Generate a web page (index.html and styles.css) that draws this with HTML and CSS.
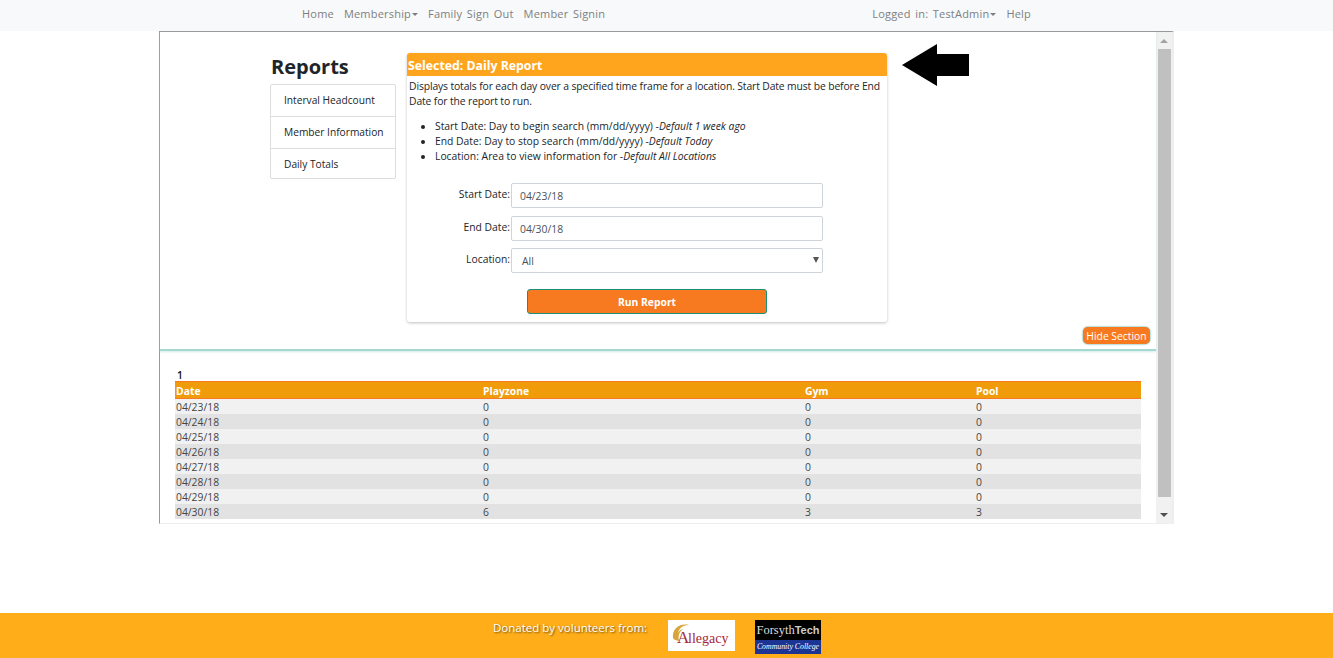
FILE: index.html
```html
<!DOCTYPE html>
<html lang="en">
<head>
    <meta charset="UTF-8">
    <title>Reports</title>
    <link rel="stylesheet" href="styles.css">
</head>
<body>
    <nav class="topnav">
        <div class="navleft">
            <a href="#">Home</a>
            <a href="#" class="caret">Membership</a>
            <a href="#">Family Sign Out</a>
            <a href="#">Member Signin</a>
        </div>
        <div class="navright">
            <a href="#" class="caret">Logged in: TestAdmin</a>
            <a href="#">Help</a>
        </div>
    </nav>

    <div class="frame">
        <div class="framebody">
            <section class="toppane">
                <div class="sidebar">
                    <h2>Reports</h2>
                    <ul class="reportlist">
                        <li>Interval Headcount</li>
                        <li>Member Information</li>
                        <li>Daily Totals</li>
                    </ul>
                </div>
                <div class="panel">
                    <div class="panelhead">Selected: Daily Report</div>
                    <p class="paneltext">Displays totals for each day over a specified time frame for a location. Start Date must be before End Date for the report to run.</p>
                    <ul class="fields">
                        <li>Start Date: Day to begin search (mm/dd/yyyy) -<em>Default 1 week ago</em></li>
                        <li>End Date: Day to stop search (mm/dd/yyyy) -<em>Default Today</em></li>
                        <li>Location: Area to view information for -<em>Default All Locations</em></li>
                    </ul>
                    <form class="reportform">
                        <label>Start Date:</label>
                        <div class="input">04/23/18</div>
                        <label>End Date:</label>
                        <div class="input">04/30/18</div>
                        <label>Location:</label>
                        <div class="input select">All</div>
                    </form>
                    <button class="runbtn" type="button">Run Report</button>
                </div>
                <svg class="arrow" width="68" height="42" viewBox="0 0 68 42">
                    <polygon points="0,21 35,0 35,10 67,10 67,32 35,32 35,42" fill="#000"/>
                </svg>
                <button class="hidebtn" type="button">Hide Section</button>
            </section>
            <section class="bottompane">
                <div class="pagenum">1</div>
                <table class="results">
                    <thead>
                        <tr><th>Date</th><th>Playzone</th><th>Gym</th><th>Pool</th></tr>
                    </thead>
                    <tbody>
                        <tr><td>04/23/18</td><td>0</td><td>0</td><td>0</td></tr>
                        <tr><td>04/24/18</td><td>0</td><td>0</td><td>0</td></tr>
                        <tr><td>04/25/18</td><td>0</td><td>0</td><td>0</td></tr>
                        <tr><td>04/26/18</td><td>0</td><td>0</td><td>0</td></tr>
                        <tr><td>04/27/18</td><td>0</td><td>0</td><td>0</td></tr>
                        <tr><td>04/28/18</td><td>0</td><td>0</td><td>0</td></tr>
                        <tr><td>04/29/18</td><td>0</td><td>0</td><td>0</td></tr>
                        <tr><td>04/30/18</td><td>6</td><td>3</td><td>3</td></tr>
                    </tbody>
                </table>
            </section>
        </div>
        <div class="scrollbar">
            <div class="sarrow up"></div>
            <div class="thumb"></div>
            <div class="sarrow down"></div>
        </div>
    </div>

    <footer class="footer">
        <span class="donated">Donated by volunteers from:</span>
        <svg class="allegacy" width="67" height="31" viewBox="0 0 67 31">
            <rect width="67" height="31" fill="#fff"/>
            <path d="M5 18 C4 9 11 3 21 5 C14 5 9 9 9 19 C8 14 11 10 15 9 C11 12 10 16 11 21 C8 20 6 20 5 18 Z" fill="#d9a53a"/>
            <text x="9" y="23" class="alogo big">A</text>
            <text x="20" y="23" class="alogo">llegacy</text>
        </svg>
        <div class="forsyth">
            <div class="fname">Forsyth<b>Tech</b></div>
            <div class="fcollege">Community College</div>
        </div>
    </footer>
</body>
</html>
```

FILE: styles.css
```css
*{
    margin: 0;
    padding: 0;
    box-sizing: border-box;
    list-style: none;
}
html,body{
    height: 100%;
}
body{
    display: flex;
    flex-direction: column;
    height: 658px;
    overflow: hidden;
    background: #fff;
    color: #212529;
    font-family: "Open Sans", "Noto Sans", sans-serif;
    font-size: 10.35px;
}
a{
    color: #7d7f81;
    text-decoration: none;
}

/* top nav */
.topnav{
    display: flex;
    justify-content: space-between;
    height: 31px;
    padding: 0 302px 5px;
    align-items: center;
    background: #f8f9fa;
    font-size: 11px;
    letter-spacing: 0.2px;
    word-spacing: 1.5px;
}
.navleft,.navright{
    display: flex;
    gap: 10px;
}
.caret::after{
    content: "";
    display: inline-block;
    margin-left: 1px;
    vertical-align: 2px;
    border-top: 3px solid #7d7f81;
    border-left: 3px solid transparent;
    border-right: 3px solid transparent;
}

/* main frame */
.frame{
    display: flex;
    width: 1015px;
    height: 493px;
    margin-left: 159px;
    border-top: 1px solid #999;
    border-left: 1px solid #999;
    border-bottom: 1px solid #eee;
    border-right: 2px solid #eee;
}
.framebody{
    flex: 1;
    display: flex;
    flex-direction: column;
}
.toppane{
    position: relative;
    display: flex;
    height: 319px;
    padding: 21px 0 0 110px;
    border-bottom: 2px solid #a5d8d0;
    box-shadow: 0 1px 2px rgba(165,216,208,0.5);
}
.sidebar{
    width: 126px;
    margin-right: 11px;
}
.sidebar h2{
    margin-top: -4px;
    font-size: 20px;
    font-weight: 700;
    line-height: 35px;
    margin-left: 1px;
}
.reportlist{
    border: 1px solid #ddd;
    border-radius: 2px;
    font-size: 10.2px;
}
.reportlist li{
    height: 32px;
    line-height: 31px;
    padding-left: 13px;
    border-bottom: 1px solid #ddd;
}
.reportlist li:last-child{
    height: 29px;
    line-height: 31px;
    border-bottom: 0;
}
.panel{
    width: 480px;
    height: 269px;
    background: #fff;
    border-radius: 3px;
    box-shadow: 0 1px 3px rgba(0,0,0,0.25);
    text-align: left;
}
.panelhead{
    height: 23px;
    line-height: 25px;
    padding-left: 1px;
    background: #ffa51d;
    color: #fff;
    font-size: 12.3px;
    font-weight: 700;
    border-radius: 3px 3px 0 0;
}
.paneltext{
    padding: 3px 2px 0;
    line-height: 15px;
    letter-spacing: -0.12px;
}
.fields{
    margin-top: 10px;
    padding-left: 28px;
    line-height: 15px;
}
.fields li{
    list-style: disc;
}
.reportform{
    display: grid;
    grid-template-columns: 104px 312px;
    grid-auto-rows: 25px;
    row-gap: 7.5px;
    margin-top: 19px;
    align-items: start;
}
.reportform label{
    text-align: right;
    padding-right: 1px;
    line-height: 22px;
}
.input{
    height: 25px;
    line-height: 25px;
    padding-left: 8px;
    border: 1px solid #ced4da;
    border-radius: 2px;
    color: #495057;
}
.select{
    position: relative;
    padding-left: 10px;
}
.select::after{
    content: "";
    position: absolute;
    right: 3px;
    top: 8px;
    border-top: 6px solid #555;
    border-left: 3px solid transparent;
    border-right: 3px solid transparent;
}
.runbtn{
    display: block;
    width: 240px;
    height: 25px;
    margin: 16px 0 0 120px;
    background: #f77a21;
    border: 1px solid #1c8f78;
    border-radius: 3px;
    color: #fff;
    font-family: inherit;
    font-size: 10.35px;
    font-weight: 700;
}
.arrow{
    position: absolute;
    left: 742px;
    top: 12px;
}
.hidebtn{
    position: absolute;
    right: 6px;
    bottom: 5px;
    width: 67px;
    height: 17px;
    background: #f77a21;
    border: 0;
    border-radius: 5px;
    box-shadow: 0 0 2px #1c8f78;
    color: #fff;
    font-family: inherit;
    font-size: 10.35px;
}
.bottompane{
    padding: 16px 15px 0 15px;
}
.pagenum{
    height: 14px;
    line-height: 17px;
    padding-left: 2px;
    font-weight: 600;
    color: #111;
}
.results{
    width: 966px;
    border-collapse: collapse;
    table-layout: fixed;
    font-size: 10.35px;
}
.results th{
    height: 17px;
    padding: 1px 0 0 1px;
    background: #f09c0a;
    border-top: 1px solid #f77a21;
    border-bottom: 1px solid #f77a21;
    color: #fff;
    font-weight: 700;
    text-align: left;
}
.results th:nth-child(1){
    width: 307px;
}
.results th:nth-child(2){
    width: 322px;
}
.results th:nth-child(3){
    width: 171px;
}
.results td{
    height: 15px;
    line-height: 14px;
    padding: 1px 0 0 1px;
    color: #444;
}
.results tbody tr:nth-child(odd){
    background: #f1f1f1;
}
.results tbody tr:nth-child(even){
    background: #e2e2e2;
}

/* fake scrollbar */
.scrollbar{
    display: flex;
    flex-direction: column;
    align-items: center;
    width: 17px;
    background: #f1f1f1;
}
.sarrow{
    flex: none;
    height: 17px;
    display: flex;
    align-items: center;
}
.sarrow::after{
    content: "";
    border-left: 4px solid transparent;
    border-right: 4px solid transparent;
}
.up::after{
    border-bottom: 4px solid #a3a3a3;
}
.down::after{
    border-top: 4px solid #505050;
}
.thumb{
    flex: 1;
    width: 13px;
    margin-bottom: 9px;
    background: #c0c0c0;
}

/* footer */
.footer{
    display: flex;
    align-items: flex-start;
    height: 45px;
    margin-top: auto;
    padding: 7px 0 0 493px;
    background: #ffae19;
}
.donated{
    width: 175px;
    color: #fff;
    font-size: 11.5px;
    line-height: 16px;
    text-shadow: 1px 1px 2px rgba(0,0,0,0.6);
}
.allegacy{
    flex: none;
    margin-right: 20px;
}
.alogo{
    font-family: "Liberation Serif", serif;
    font-size: 14px;
    fill: #a5283c;
}
.big{
    font-size: 17px;
}
.forsyth{
    width: 66px;
    height: 34px;
    background: #000;
}
.fname{
    height: 20px;
    font-family: "Liberation Serif", serif;
    font-size: 12.5px;
    line-height: 21px;
    color: #ddd;
    text-align: center;
    white-space: nowrap;
}
.fname b{
    font-family: "Liberation Sans", sans-serif;
    font-size: 11px;
    color: #ccc;
}
.fcollege{
    height: 14px;
    background: #1c3494;
    color: #fff;
    font-family: "Liberation Serif", serif;
    font-style: italic;
    font-size: 7.8px;
    line-height: 14px;
    text-align: center;
    white-space: nowrap;
}
```
